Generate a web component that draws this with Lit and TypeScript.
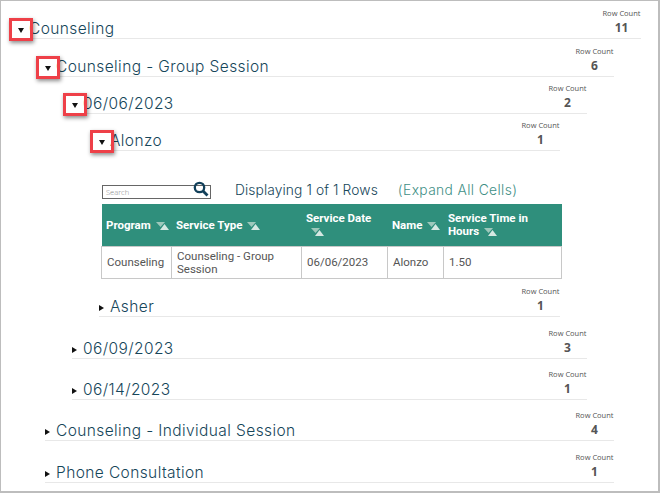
import { LitElement, css, html, nothing } from "lit";
import { customElement } from "lit/decorators.js";

type Row = {
	label: string;
	level: number;
	count: number;
	open?: boolean;
	detail?: boolean;
	short?: boolean;
};

const ROWS: Row[] = [
	{ label: "Counseling", level: 0, count: 11, open: true },
	{ label: "Counseling - Group Session", level: 1, count: 6, open: true },
	{ label: "06/06/2023", level: 2, count: 2, open: true },
	{ label: "Alonzo", level: 3, count: 1, open: true, detail: true },
	{ label: "Asher", level: 3, count: 1, short: true },
	{ label: "06/09/2023", level: 2, count: 3 },
	{ label: "06/14/2023", level: 2, count: 1 },
	{ label: "Counseling - Individual Session", level: 1, count: 4 },
	{ label: "Phone Consultation", level: 1, count: 1 },
];

const COLUMNS = [
	{ title: "Program", width: 70 },
	{ title: "Service Type", width: 130 },
	{ title: "Service Date", width: 86 },
	{ title: "Name", width: 56 },
	{ title: "Service Time in Hours", width: 118 },
];

const CELLS = [
	"Counseling",
	"Counseling - Group Session",
	"06/06/2023",
	"Alonzo",
	"1.50",
];

@customElement("app-root")
export class AppRoot extends LitElement {
	static styles = css`
		:host {
			display: block;
			box-sizing: border-box;
			width: 660px;
			height: 493px;
			padding-top: 1px;
			border: solid #bdbdbd;
			border-width: 1px 2px 2px 1px;
			overflow: hidden;
			background: #fff;
			font-family: "Inter", "Liberation Sans", sans-serif;
			font-weight: 300;
			color: #16465a;
		}
		.row {
			display: flex;
			align-items: flex-end;
			box-sizing: border-box;
			height: 41.4px;
			border-bottom: 1px solid #e8e8e8;
		}
		.row.open {
			height: 37.3px;
		}
		.row.short {
			height: 38px;
		}
		.toggle {
			position: relative;
			flex: none;
			width: 11px;
			height: 20px;
		}
		.arrow {
			position: absolute;
			left: 0;
			top: 9px;
			width: 0;
			height: 0;
			border-left: 5px solid #111;
			border-top: 3px solid transparent;
			border-bottom: 3px solid transparent;
		}
		.open .arrow {
			top: 10px;
			border-top: 5px solid #111;
			border-left: 3px solid transparent;
			border-right: 3px solid transparent;
			border-bottom: 0;
		}
		.mark {
			position: absolute;
			left: -9px;
			top: 0;
			width: 24px;
			height: 23px;
			box-sizing: border-box;
			border: 3px solid #ee4048;
			box-shadow: 1px 2px 4px rgba(0, 0, 0, 0.45);
		}
		.label {
			flex: 1;
			font-size: 15.5px;
			line-height: 18px;
			letter-spacing: 0.4px;
			white-space: nowrap;
		}
		.count {
			flex: none;
			width: 39px;
			text-align: center;
			font-family: "Open Sans", "Liberation Sans", sans-serif;
			font-weight: 400;
			color: #555;
		}
		.count small {
			display: block;
			font-size: 7.5px;
			line-height: 10px;
			white-space: nowrap;
		}
		.count b {
			display: block;
			font-size: 12px;
			line-height: 20px;
		}
		.detail {
			margin: 29px 97px 0 101px;
		}
		.tools {
			display: flex;
			align-items: center;
			height: 20px;
			margin-bottom: 4px;
			font-size: 13.8px;
			letter-spacing: 0.1px;
		}
		.search {
			display: flex;
			align-items: center;
			justify-content: space-between;
			box-sizing: border-box;
			width: 109px;
			height: 14px;
			margin-top: 4px;
			margin-right: 24px;
			border: 1px solid #666;
			font-family: "Open Sans", sans-serif;
			font-size: 7.5px;
			letter-spacing: 0;
			color: #888;
		}
		.search span {
			padding-left: 3px;
		}
		.search svg {
			margin-top: -6px;
			margin-right: 1px;
		}
		.expand {
			margin-left: 20px;
			letter-spacing: 0.38px;
			color: #3f8f86;
		}
		table {
			width: 460px;
			margin-left: -1px;
			table-layout: fixed;
			border-collapse: collapse;
			font-family: "Roboto", "Open Sans", sans-serif;
			font-size: 11.5px;
			font-weight: 400;
			line-height: 13px;
		}
		th {
			height: 42px;
			padding: 0 1px 0 4.5px;
			background: #2f8f7c;
			color: #fff;
			text-align: left;
			font-weight: 700;
		}
		td {
			height: 32px;
			box-sizing: border-box;
			padding: 0 4px 0 5px;
			border: 1px solid #c8c8c8;
			color: #555;
		}
		.sort {
			display: inline-block;
			vertical-align: -1px;
			margin-left: 5px;
		}
	`;

	private sortIcon() {
		return html`<svg class="sort" width="13" height="8" viewBox="0 0 13 8">
			<path d="M0 0H9L4.5 5Z" fill="#9dc8bb" />
			<path d="M4 8H13L8.5 2Z" fill="#d5e8e2" />
		</svg>`;
	}

	private renderDetail() {
		return html`<div class="detail">
			<div class="tools">
				<div class="search">
					<span>Search</span>
					<svg width="16" height="16" viewBox="0 0 16 16">
						<circle cx="6.5" cy="6.5" r="4.7" fill="none" stroke="#12405a" stroke-width="2.3" />
						<path d="M10 10L14.5 14.5" stroke="#12405a" stroke-width="2.8" />
					</svg>
				</div>
				Displaying 1 of 1 Rows
				<span class="expand">(Expand All Cells)</span>
			</div>
			<table>
				<colgroup>
					${COLUMNS.map((c) => html`<col style="width:${c.width}px" />`)}
				</colgroup>
				<thead>
					<tr>
						${COLUMNS.map((c) => html`<th>${c.title}${this.sortIcon()}</th>`)}
					</tr>
				</thead>
				<tbody>
					<tr>
						${CELLS.map((c) => html`<td>${c}</td>`)}
					</tr>
				</tbody>
			</table>
		</div>`;
	}

	render() {
		return ROWS.map((r) => {
			const inset = 17 + r.level * 27;
			return html`<div
					class="row ${r.open ? "open" : ""} ${r.short ? "short" : ""}"
					style="margin-left:${inset}px;margin-right:${inset}px"
				>
					<div class="toggle">
						<span class="arrow"></span>
						${r.open ? html`<span class="mark"></span>` : nothing}
					</div>
					<div class="label">${r.label}</div>
					<div class="count">
						<small>Row Count</small>
						<b>${r.count}</b>
					</div>
				</div>
				${r.detail ? this.renderDetail() : nothing}`;
		});
	}
}
